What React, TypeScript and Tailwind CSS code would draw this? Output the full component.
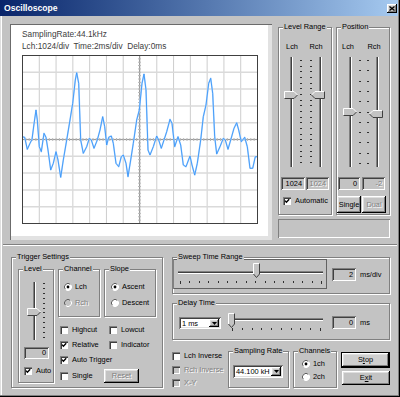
import React from "react";

const DIS = "text-[#808080] [text-shadow:1px_1px_0_#fff]";
const BTN =
  "flex items-center justify-center bg-[#c3c3c3] shadow-[inset_-1px_-1px_0_#000,inset_1px_1px_0_#fff,inset_-2px_-2px_0_#808080,inset_2px_2px_0_#dfdfdf]";
const SUNK = "shadow-[inset_1px_1px_0_#808080,inset_-1px_-1px_0_#fff,inset_2px_2px_0_#404040,inset_-2px_-2px_0_#dfdfdf]";
const EDIT = "flex items-center justify-end pr-[3px] shadow-[inset_1px_1px_0_#808080,inset_-1px_-1px_0_#fff,inset_2px_2px_0_#404040]";

const wave: [number, number][] = [
  [6, 260], [14, 262], [22, 298], [30, 280], [36, 268], [42, 222], [48, 180], [52, 210], [58, 290], [64, 305],
  [72, 250], [78, 262], [84, 300], [92, 360], [100, 340], [108, 305], [114, 330], [122, 382], [130, 330], [140, 270],
  [150, 210], [158, 160], [166, 90], [170, 68], [176, 100], [182, 270], [190, 310], [200, 290], [208, 265], [214, 270],
  [222, 295], [232, 270], [240, 240], [248, 200], [254, 230], [260, 285], [266, 262], [274, 258], [280, 280], [288, 340],
  [296, 350], [304, 320], [310, 315], [318, 340], [324, 380], [332, 330], [340, 280], [350, 210], [358, 180], [366, 100],
  [372, 72], [378, 120], [384, 300], [390, 315], [400, 290], [410, 258], [416, 270], [424, 295], [432, 270], [440, 245],
  [450, 208], [456, 220], [464, 290], [474, 260], [482, 285], [490, 345], [498, 350], [510, 318], [516, 345], [524, 375],
  [532, 340], [542, 270], [550, 200], [558, 165], [566, 100], [572, 85], [578, 130], [584, 260], [590, 312], [600, 290],
  [610, 265], [616, 270], [624, 298], [632, 270], [642, 235], [650, 218], [656, 240], [664, 275], [674, 262], [682, 290],
  [690, 355], [698, 355], [706, 320], [712, 320],
];

function Group({ label, className = "", children }: { label: string; className?: string; children?: React.ReactNode }) {
  return (
    <div className={`relative border border-[#808080] shadow-[inset_1px_1px_0_#fff,1px_1px_0_#fff] ${className}`}>
      <span className="absolute left-[4px] top-[-6px] bg-[#c3c3c3] px-[1px] leading-[10px] whitespace-nowrap">{label}</span>
      {children}
    </div>
  );
}

function Check({ label, checked, disabled, className = "" }: { label: string; checked?: boolean; disabled?: boolean; className?: string }) {
  return (
    <div className={`flex items-center h-[8px] ${className}`}>
      <span
        className={`relative w-[8px] h-[8px] shrink-0 ${disabled ? "bg-[#c3c3c3]" : "bg-white"} shadow-[inset_1px_1px_0_#808080,inset_2px_2px_0_#404040,inset_-1px_-1px_0_#fff]`}
      >
        {checked && (
          <svg className="absolute inset-0" width="8" height="8" viewBox="0 0 8 8">
            <path d="M2 3.6 L3.4 5.2 L6.2 2.2" fill="none" stroke="#000" strokeWidth="1.4" />
          </svg>
        )}
      </span>
      <span className={`ml-[4px] leading-[10px] whitespace-nowrap ${disabled ? DIS : ""}`}>{label}</span>
    </div>
  );
}

function Radio({ label, checked, disabled, className = "" }: { label: string; checked?: boolean; disabled?: boolean; className?: string }) {
  return (
    <div className={`flex items-center h-[8px] ${className}`}>
      <svg width="8" height="8" viewBox="0 0 8 8" className="shrink-0">
        <circle cx="4" cy="4" r="3.5" fill={disabled ? "#c3c3c3" : "#fff"} />
        <path d="M1.5 6.5 A3.5 3.5 0 0 1 6.5 1.5" fill="none" stroke="#606060" strokeWidth="1" />
        <path d="M6.5 1.5 A3.5 3.5 0 0 1 1.5 6.5" fill="none" stroke="#fff" strokeWidth="1" />
        {checked && <circle cx="4" cy="4" r="1.4" fill="#000" />}
      </svg>
      <span className={`ml-[3px] leading-[10px] whitespace-nowrap ${disabled ? DIS : ""}`}>{label}</span>
    </div>
  );
}

function Combo({ value, className = "" }: { value: string; className?: string }) {
  return (
    <div className={`flex bg-white p-[2px] ${SUNK} ${className}`}>
      <span className="flex-1 whitespace-nowrap pl-[1px] leading-[9px]">{value}</span>
      <span className={`${BTN} w-[10px] shrink-0`}>
        <svg width="5" height="3" viewBox="0 0 5 3">
          <path d="M0 0 H5 L2.5 3 Z" fill="#000" />
        </svg>
      </span>
    </div>
  );
}

function ThumbSide({ x, y, dir }: { x: number; y: number; dir: "r" | "l" }) {
  if (dir === "r") {
    return (
      <g>
        <polygon points={`${x},${y} ${x + 10},${y} ${x + 14},${y + 4} ${x + 10},${y + 8} ${x},${y + 8}`} fill="#c3c3c3" />
        <polyline points={`${x + 0.5},${y + 7.5} ${x + 0.5},${y + 0.5} ${x + 10},${y + 0.5} ${x + 13.5},${y + 4}`} fill="none" stroke="#fff" />
        <polyline points={`${x + 13.5},${y + 4} ${x + 10},${y + 7.5} ${x + 0.5},${y + 7.5}`} fill="none" stroke="#404040" />
      </g>
    );
  }
  return (
    <g>
      <polygon points={`${x},${y + 4} ${x + 4},${y} ${x + 14},${y} ${x + 14},${y + 8} ${x + 4},${y + 8}`} fill="#c3c3c3" />
      <polyline points={`${x + 0.5},${y + 4} ${x + 4},${y + 0.5} ${x + 13.5},${y + 0.5}`} fill="none" stroke="#fff" />
      <polyline points={`${x + 13.5},${y + 0.5} ${x + 13.5},${y + 7.5} ${x + 4},${y + 7.5} ${x + 0.5},${y + 4}`} fill="none" stroke="#404040" />
    </g>
  );
}

function ThumbDown({ x, y }: { x: number; y: number }) {
  return (
    <g>
      <polygon points={`${x},${y} ${x + 7},${y} ${x + 7},${y + 11} ${x + 3.5},${y + 15} ${x},${y + 11}`} fill="#c3c3c3" />
      <polyline points={`${x + 0.5},${y + 11} ${x + 0.5},${y + 0.5} ${x + 6.5},${y + 0.5}`} fill="none" stroke="#fff" />
      <polyline points={`${x + 6.5},${y + 0.5} ${x + 6.5},${y + 11} ${x + 3.5},${y + 14.5} ${x + 0.5},${y + 11}`} fill="none" stroke="#404040" />
    </g>
  );
}

function VTrack({ x, y1, y2 }: { x: number; y1: number; y2: number }) {
  return (
    <g>
      <rect x={x} y={y1} width="1" height={y2 - y1} fill="#808080" />
      <rect x={x + 1} y={y1} width="1" height={y2 - y1} fill="#404040" />
      <rect x={x + 2} y={y1} width="1" height={y2 - y1} fill="#fff" />
    </g>
  );
}

function HTrack({ y, x1, x2 }: { y: number; x1: number; x2: number }) {
  return (
    <g>
      <rect x={x1} y={y} width={x2 - x1} height="1" fill="#808080" />
      <rect x={x1} y={y + 1} width={x2 - x1} height="1" fill="#404040" />
      <rect x={x1} y={y + 2} width={x2 - x1} height="1" fill="#fff" />
    </g>
  );
}

function VTicks({ x, y1, y2, n }: { x: number; y1: number; y2: number; n: number }) {
  const step = (y2 - y1) / (n - 1);
  return (
    <g>
      {Array.from({ length: n }, (_, i) => (
        <rect key={i} x={x} y={Math.round(y1 + i * step)} width="2" height="1" fill="#303030" />
      ))}
    </g>
  );
}

function HTicks({ y, x1, x2, n }: { y: number; x1: number; x2: number; n: number }) {
  const step = (x2 - x1) / (n - 1);
  return (
    <g>
      {Array.from({ length: n }, (_, i) => (
        <rect key={i} x={Math.round(x1 + i * step)} y={y} width="1" height={i === 0 || i === n - 1 ? 3 : 2} fill="#303030" />
      ))}
    </g>
  );
}

function Scope() {
  const W = 235;
  const H = 168;
  const cw = W / 14;
  const ch = H / 10;
  const pts = wave.map(([zx, zy]) => `${((zx - 6) / 3).toFixed(1)},${((zy - 15) / 3).toFixed(1)}`).join(" ");
  return (
    <svg width="236" height="169" viewBox="0 0 236 169">
      <rect x="0" y="0" width="236" height="169" fill="#fff" />
      {Array.from({ length: 13 }, (_, i) => (
        <line key={"v" + i} x1={(i + 1) * cw + 0.5} y1="0" x2={(i + 1) * cw + 0.5} y2={H} stroke="#cdcdcd" strokeWidth="1" />
      ))}
      {Array.from({ length: 9 }, (_, i) => (
        <line key={"h" + i} x1="0" y1={(i + 1) * ch + 0.5} x2={W} y2={(i + 1) * ch + 0.5} stroke="#dadada" strokeWidth="1.5" />
      ))}
      <line x1="0" y1="84.5" x2={W} y2="84.5" stroke="#9a9a9a" />
      <line x1="117.5" y1="0" x2="117.5" y2={H} stroke="#9a9a9a" />
      {Array.from({ length: 71 }, (_, i) => (
        <line key={"tx" + i} x1={i * (cw / 5) + 0.5} y1="83" x2={i * (cw / 5) + 0.5} y2="86" stroke="#b8b8b8" />
      ))}
      {Array.from({ length: 51 }, (_, i) => (
        <line key={"ty" + i} x1="116" y1={i * (ch / 5) + 0.5} x2="119" y2={i * (ch / 5) + 0.5} stroke="#b8b8b8" />
      ))}
      <polyline points={pts} fill="none" stroke="#b5d9ff" strokeWidth="1.6" strokeLinejoin="round" />
      <polyline points={pts} fill="none" stroke="#3a95f7" strokeWidth="0.9" strokeLinejoin="round" />
      <rect x="0.5" y="0.5" width={W} height={H} fill="none" stroke="#404040" />
    </svg>
  );
}

export default function App() {
  return (
    <div className="w-[400px] h-[397px] bg-[#c3c3c3] flex flex-col font-['Liberation_Sans',Arial,sans-serif] text-[7.4px] text-black shadow-[inset_-1px_-1px_0_#000,inset_-2px_-2px_0_#808080,inset_1px_0_0_#dfdfdf,inset_2px_0_0_#fff] overflow-hidden">
      {/* title bar */}
      <div className="w-[398px] h-[16px] shrink-0 flex items-center justify-between pl-[4px] pr-[1px] bg-gradient-to-r from-[#0a246a] to-[#a6caf0]">
        <span className="text-white font-bold text-[8.6px] leading-[10px]">Oscilloscope</span>
        <span className={`${BTN} w-[10px] h-[9px]`}>
          <svg width="6" height="5" viewBox="0 0 6 5">
            <path d="M0.5 0.5 L5.5 4.5 M5.5 0.5 L0.5 4.5" stroke="#000" strokeWidth="1.3" />
          </svg>
        </span>
      </div>

      {/* top section */}
      <div className="flex h-[225px] shrink-0">
        <div className="ml-[10px] mt-[8px] w-[262px] h-[216px] bg-white shadow-[inset_1px_1px_0_#6b6b6b,inset_-4px_-4px_0_#e2e2e2] pl-[12px] pt-[4px]">
          <div className="text-[8.3px] leading-[12px] text-[#404040]">SamplingRate:44.1kHz</div>
          <div className="text-[8.3px] leading-[12px] text-[#404040] whitespace-pre">Lch:1024/div  Time:2ms/div  Delay:0ms</div>
          <div className="mt-[3px]">
            <Scope />
          </div>
        </div>

        <div className="ml-[6px] mt-[11px] flex flex-col w-[112px]">
          <div className="flex gap-[4px]">
            <Group label="Level Range" className="w-[54px] h-[188px]">
              <div className="mt-[14px] flex pl-[1px] leading-[10px]">
                <span className="w-[24px] text-center">Lch</span>
                <span className="w-[24px] text-center">Rch</span>
              </div>
              <svg className="mt-[2px] block" width="52" height="116" viewBox="0 0 52 116">
                <VTrack x={11} y1={3} y2={113} />
                <VTicks x={21} y1={6} y2={108} n={19} />
                <VTicks x={31} y1={6} y2={108} n={19} />
                <VTrack x={40} y1={3} y2={113} />
                <ThumbSide x={5} y={37} dir="r" />
                <ThumbSide x={32} y={37} dir="l" />
              </svg>
              <div className="mt-[7px] flex pl-[2px] gap-[1px]">
                <span className={`${EDIT} w-[24px] h-[13px]`}>1024</span>
                <span className={`${EDIT} w-[23px] h-[13px] ${DIS}`}>1024</span>
              </div>
              <Check label="Automatic" checked className="mt-[7px] ml-[4px]" />
            </Group>

            <Group label="Position" className="w-[54px] h-[188px]">
              <div className="mt-[14px] flex gap-[4px] leading-[10px]">
                <span className="w-[22px] text-center">Lch</span>
                <span className="w-[22px] text-center">Rch</span>
              </div>
              <svg className="mt-[2px] block" width="52" height="116" viewBox="0 0 52 116">
                <VTrack x={12} y1={3} y2={113} />
                <VTicks x={22} y1={6} y2={109} n={11} />
                <VTicks x={30} y1={6} y2={109} n={11} />
                <VTrack x={39} y1={3} y2={113} />
                <ThumbSide x={6} y={54} dir="r" />
                <ThumbSide x={32} y={56} dir="l" />
              </svg>
              <div className="mt-[7px] flex pl-[1px] gap-[2px]">
                <span className={`${EDIT} w-[22px] h-[13px]`}>0</span>
                <span className={`${EDIT} w-[23px] h-[13px] ${DIS}`}>-2</span>
              </div>
              <div className="mt-[6px] flex gap-[1px]">
                <span className={`${BTN} w-[24px] h-[17px]`}>Single</span>
                <span className={`${BTN} w-[24px] h-[17px] ${DIS}`}>Dual</span>
              </div>
            </Group>
          </div>
          <div className="mt-[4px] h-[19px] w-[112px] shadow-[inset_1px_1px_0_#808080,inset_-1px_-1px_0_#fff]" />
        </div>
      </div>

      {/* separator */}
      <div className="mt-[3px] mx-[3px] h-[2px] shrink-0 border-t border-t-[#808080] border-b border-b-white" />

      {/* bottom section */}
      <div className="flex">
        <Group label="Trigger Settings" className="ml-[11px] mt-[11px] w-[152px] h-[131px] flex">
          <Group label="Level" className="ml-[6px] mt-[11px] w-[36px] h-[114px]">
            <svg className="mt-[8px] block" width="34" height="66" viewBox="0 0 34 66">
              <VTrack x={14} y1={4} y2={62} />
              <VTicks x={24} y1={5} y2={59} n={12} />
              <ThumbSide x={8} y={30} dir="r" />
            </svg>
            <span className={`${EDIT} mt-[3px] ml-[5px] w-[25px] h-[12px]`}>0</span>
            <Check label="Auto" checked className="mt-[8px] ml-[5px]" />
          </Group>

          <div className="ml-[4px] mt-[11px] flex flex-col">
            <div className="flex">
              <Group label="Channel" className="w-[42px] h-[48px]">
                <Radio label="Lch" checked className="mt-[13px] ml-[5px]" />
                <Radio label="Rch" disabled className="mt-[8px] ml-[5px]" />
              </Group>
              <Group label="Slope" className="ml-[4px] w-[52px] h-[48px]">
                <Radio label="Ascent" checked className="mt-[13px] ml-[6px]" />
                <Radio label="Descent" className="mt-[8px] ml-[6px]" />
              </Group>
            </div>
            <div className="mt-[9px] flex">
              <Check label="Highcut" className="ml-[2px] w-[49px]" />
              <Check label="Lowcut" />
            </div>
            <div className="mt-[7px] flex">
              <Check label="Relative" checked className="ml-[2px] w-[49px]" />
              <Check label="Indicator" />
            </div>
            <div className="mt-[7px] flex">
              <Check label="Auto Trigger" checked className="ml-[2px]" />
            </div>
            <div className="mt-[5px] flex items-center h-[14px]">
              <Check label="Single" className="ml-[2px] w-[44px]" />
              <span className={`${BTN} w-[35px] h-[14px] ${DIS}`}>Reset</span>
            </div>
          </div>
        </Group>

        <div className="ml-[9px] mt-[11px] w-[218px] flex flex-col">
          <Group label="Sweep Time Range" className="h-[37px] flex items-start">
            <svg className="block shrink-0" width="154" height="31" viewBox="0 0 154 31">
              <rect x="0.5" y="1.5" width="153" height="29" fill="none" stroke="#000" strokeDasharray="1 1" />
              <HTrack y={13} x1={5} x2={150} />
              <HTicks y={23} x1={7} x2={148} n={16} />
              <ThumbDown x={80} y={5} />
            </svg>
            <span className={`${EDIT} ml-[5px] mt-[10px] w-[24px] h-[13px]`}>2</span>
            <span className="ml-[4px] mt-[10px] leading-[13px]">ms/div</span>
          </Group>

          <Group label="Delay Time" className="mt-[9px] h-[37px] flex items-start">
            <Combo value="1 ms" className="ml-[6px] mt-[13px] w-[42px] h-[12px]" />
            <svg className="ml-[3px] mt-[7px] block shrink-0" width="104" height="21" viewBox="0 0 104 21">
              <HTrack y={7} x1={4} x2={99} />
              <HTicks y={17} x1={8} x2={96} n={10} />
              <ThumbDown x={4} y={2} />
            </svg>
            <span className={`${EDIT} ml-[4px] mt-[12px] w-[24px] h-[13px]`}>0</span>
            <span className="ml-[4px] mt-[12px] leading-[13px]">ms</span>
          </Group>

          <div className="mt-[6px] flex items-start">
            <div className="w-[56px] flex flex-col">
              <Check label="Lch Inverse" className="mt-[6px]" />
              <Check label="Rch Inverse" disabled className="mt-[6px]" />
              <Check label="X-Y" disabled className="mt-[5px]" />
            </div>
            <Group label="Sampling Rate" className="mt-[5px] w-[61px] h-[37px]">
              <Combo value="44.100 kH" className="ml-[4px] mt-[13px] w-[50px] h-[13px]" />
            </Group>
            <Group label="Channels" className="ml-[4px] mt-[5px] w-[44px] h-[37px]">
              <Radio label="1ch" checked className="ml-[8px] mt-[8px]" />
              <Radio label="2ch" className="ml-[8px] mt-[5px]" />
            </Group>
            <div className="ml-[4px] mt-[6px] flex flex-col">
              <span className="w-[49px] h-[16px] border border-black flex">
                <span className={`${BTN} flex-1 bg-[#cfcfcf]`}>
                  S<u>t</u>op
                </span>
              </span>
              <span className={`${BTN} mt-[3px] ml-[1px] w-[48px] h-[14px]`}>
                E<u>x</u>it
              </span>
            </div>
          </div>
        </div>
      </div>
    </div>
  );
}
